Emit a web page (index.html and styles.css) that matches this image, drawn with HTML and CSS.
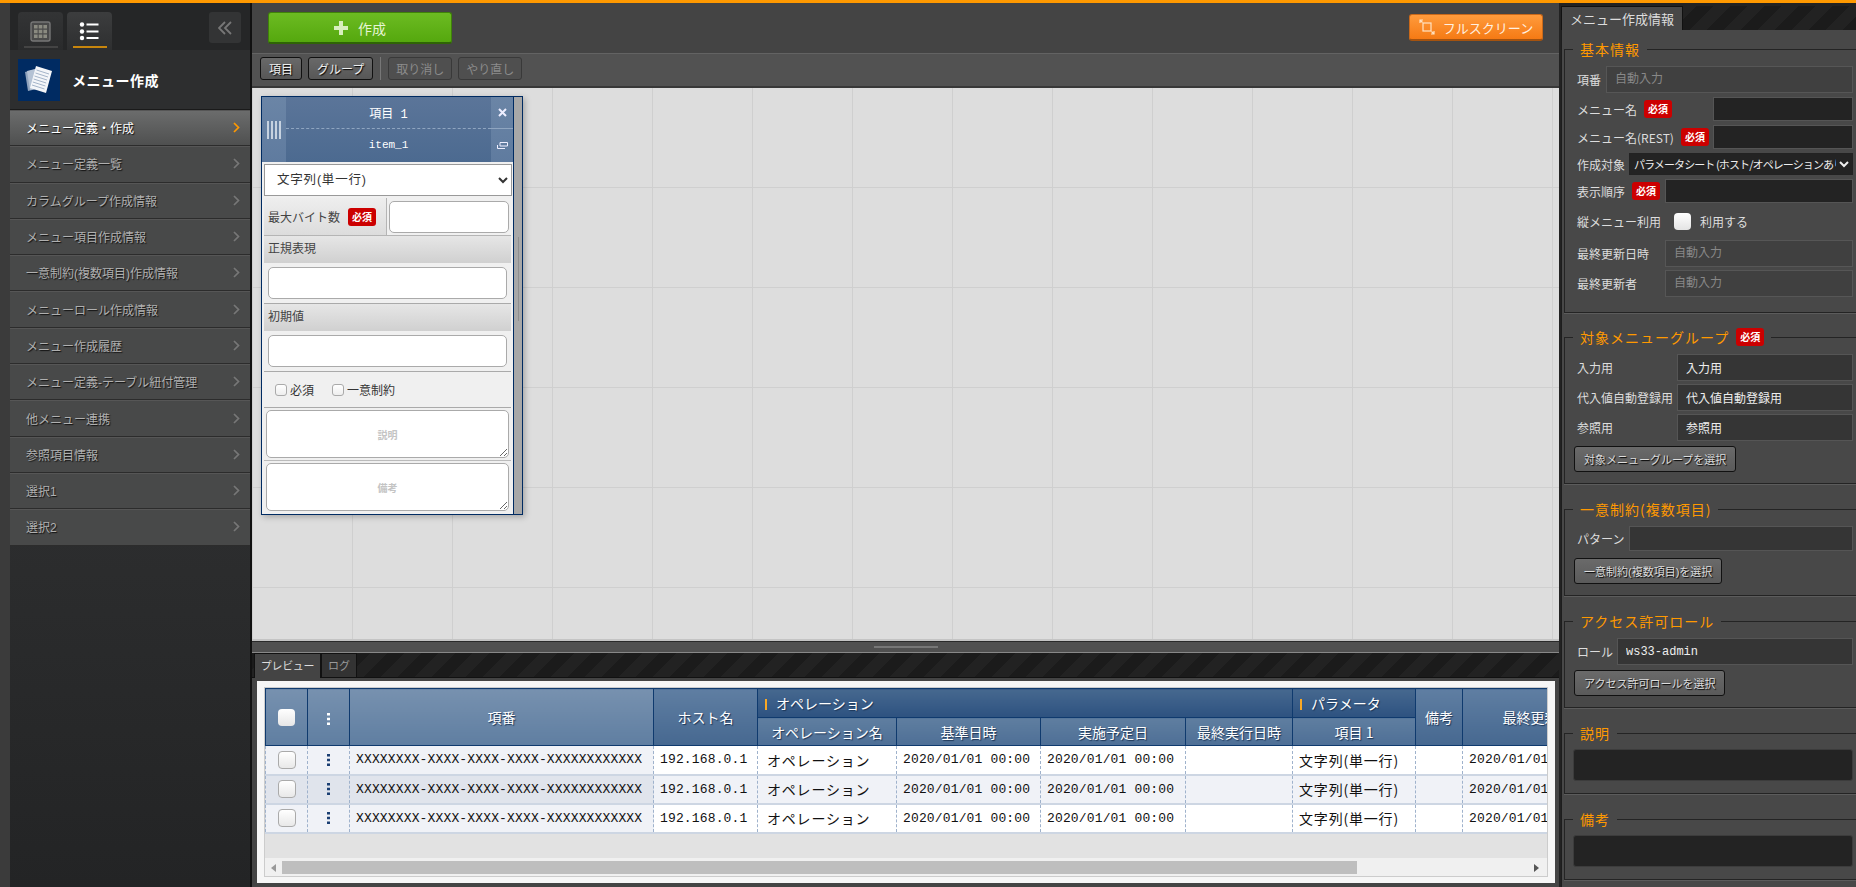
FILE: index.html
```html
<!DOCTYPE html>
<html lang="ja">
<head>
    <meta charset="UTF-8">
    <title>メニュー作成</title>
    <link rel="stylesheet" href="styles.css">
</head>
<body>
<div class="app">
    <div class="edge"></div>

    <!-- サイドメニュー -->
    <aside class="sidebar">
        <div class="side-tabs">
            <div class="side-tab">
                <svg class="tab-icon" viewBox="0 0 21 21"><rect x="1" y="1" width="19" height="19" rx="2" fill="#4a4a4a" stroke="#777" stroke-width="1.4"/><path d="M4 4h3.600v3.600H4zM8.700 4h3.600v3.600H8.700zM13.400 4H17v3.600h-3.600zM4 8.700h3.600v3.600H4zM8.700 8.700h3.600v3.600H8.700zM13.400 8.700H17v3.600h-3.600zM4 13.400h3.600V17H4zM8.700 13.400h3.600V17H8.700zM13.400 13.400H17V17h-3.600z" fill="#8a8a80"/></svg>
                <span class="tab-line"></span>
            </div>
            <div class="side-tab active">
                <svg class="tab-icon" viewBox="0 0 21 21"><circle cx="3" cy="3.500" r="2.200" fill="#fff"/><circle cx="3" cy="10.500" r="2.200" fill="#fff"/><circle cx="3" cy="17" r="2.200" fill="#fff"/><path d="M7.500 2.500H19.500V4.500H7.500zM7.500 9.500H19.500V11.500H7.500zM7.500 16H19.500V18H7.500z" fill="#fff"/></svg>
                <span class="tab-line"></span>
            </div>
            <div class="collapse-btn">
                <svg width="14" height="14" viewBox="0 0 14 14" fill="none" stroke="#777" stroke-width="1.800"><path d="M7 1 1 7l6 6M13 1 7 7l6 6"/></svg>
            </div>
        </div>
        <div class="side-title">
            <div class="logo">
                <svg width="30" height="30" viewBox="0 0 30 30">
                    <path d="M1 7 13 4l4 19L4 26z" fill="#8fa3bd"/>
                    <path d="M3 6 15 3l4 19L6 25z" fill="#b4c2d4"/>
                    <path d="M12 1 28 6l-6 22L6 23z" fill="#f4f6f9"/>
                    <path d="M12.500 5 25 9M11.500 8 24 12M10.500 11 23 15M9.700 14 22.200 18M8.800 17 21.400 21M8 20 20.500 24" stroke="#8fa3bd" stroke-width=".8"/>
                </svg>
            </div>
            <span class="side-name">メニュー作成</span>
        </div>
        <nav class="menu">
            <a class="menu-item active">メニュー定義・作成<svg class="chev" viewBox="0 0 7 11"><path d="M1 1l4.500 4.500L1 10"/></svg></a>
            <a class="menu-item">メニュー定義一覧<svg class="chev" viewBox="0 0 7 11"><path d="M1 1l4.500 4.500L1 10"/></svg></a>
            <a class="menu-item">カラムグループ作成情報<svg class="chev" viewBox="0 0 7 11"><path d="M1 1l4.500 4.500L1 10"/></svg></a>
            <a class="menu-item">メニュー項目作成情報<svg class="chev" viewBox="0 0 7 11"><path d="M1 1l4.500 4.500L1 10"/></svg></a>
            <a class="menu-item">一意制約(複数項目)作成情報<svg class="chev" viewBox="0 0 7 11"><path d="M1 1l4.500 4.500L1 10"/></svg></a>
            <a class="menu-item">メニューロール作成情報<svg class="chev" viewBox="0 0 7 11"><path d="M1 1l4.500 4.500L1 10"/></svg></a>
            <a class="menu-item">メニュー作成履歴<svg class="chev" viewBox="0 0 7 11"><path d="M1 1l4.500 4.500L1 10"/></svg></a>
            <a class="menu-item">メニュー定義-テーブル紐付管理<svg class="chev" viewBox="0 0 7 11"><path d="M1 1l4.500 4.500L1 10"/></svg></a>
            <a class="menu-item">他メニュー連携<svg class="chev" viewBox="0 0 7 11"><path d="M1 1l4.500 4.500L1 10"/></svg></a>
            <a class="menu-item">参照項目情報<svg class="chev" viewBox="0 0 7 11"><path d="M1 1l4.500 4.500L1 10"/></svg></a>
            <a class="menu-item">選択1<svg class="chev" viewBox="0 0 7 11"><path d="M1 1l4.500 4.500L1 10"/></svg></a>
            <a class="menu-item">選択2<svg class="chev" viewBox="0 0 7 11"><path d="M1 1l4.500 4.500L1 10"/></svg></a>
        </nav>
    </aside>

    <!-- メイン -->
    <main class="main">
        <div class="toolbar">
            <button class="btn-create">
                <svg width="14" height="14" viewBox="0 0 14 14"><path d="M5 0h4v5h5v4H9v5H5V9H0V5h5z" fill="#d8efbe"/></svg>
                作成
            </button>
            <button class="btn-full">
                <svg width="16" height="16" viewBox="0 0 16 16" fill="none" stroke="#ffe3c4" stroke-width="1.200"><rect x="4" y="4" width="8" height="8"/><path d="M1 4V1h3M1 1l2.500 2.500M15 12v3h-3M15 15l-2.500-2.500"/></svg>
                フルスクリーン
            </button>
        </div>
        <div class="subbar">
            <button class="btn">項目</button>
            <button class="btn">グループ</button>
            <span class="subbar-sep"></span>
            <button class="btn disabled">取り消し</button>
            <button class="btn disabled">やり直し</button>
        </div>

        <div class="canvas">
            <div class="card">
                <div class="card-main">
                    <div class="card-head">
                        <div class="card-handle"><span></span><span></span><span></span><span></span></div>
                        <div class="card-names">
                            <div class="card-name">項目 1</div>
                            <div class="card-name card-code">item_1</div>
                        </div>
                        <div class="card-tools">
                            <div class="card-tool">
                                <svg width="9" height="9" viewBox="0 0 9 9"><path d="M1 1l7 7M8 1 1 8" stroke="#eef" stroke-width="2"/></svg>
                            </div>
                            <div class="card-tool">
                                <svg width="11" height="7" viewBox="0 0 11 7" fill="none" stroke="#eef"><path d="M3 .5h7.500v3.500H3zM.5 3v3.500h7.500"/></svg>
                            </div>
                        </div>
                    </div>
                    <div class="card-body">
                        <select class="card-select"><option>文字列(単一行)</option></select>
                        <div class="card-row">
                            <label class="card-label">最大バイト数<span class="req">必須</span></label>
                            <div class="card-cell"><input class="card-input" type="text"></div>
                        </div>
                        <div class="card-sec">正規表現</div>
                        <div class="card-block"><input class="card-input" type="text"></div>
                        <div class="card-sec">初期値</div>
                        <div class="card-block"><input class="card-input" type="text"></div>
                        <div class="card-checks">
                            <label class="check-label"><input class="check" type="checkbox">必須</label>
                            <label class="check-label"><input class="check" type="checkbox">一意制約</label>
                        </div>
                        <div class="card-area"><textarea class="area" placeholder="説明"></textarea></div>
                        <div class="card-area"><textarea class="area" placeholder="備考"></textarea></div>
                    </div>
                </div>
                <div class="card-scroll"><span></span></div>
            </div>
        </div>

        <div class="splitter"></div>

        <div class="preview">
            <div class="tabs">
                <span class="tab active">プレビュー</span>
                <span class="tab">ログ</span>
            </div>
            <div class="preview-body">
                <div class="table-box">
                    <div class="table-clip">
                        <table class="grid">
                            <colgroup>
                                <col class="c-check"><col class="c-menu"><col class="c-id"><col class="c-host">
                                <col class="c-op"><col class="c-date"><col class="c-plan"><col class="c-last">
                                <col class="c-item"><col class="c-note"><col class="c-upd">
                            </colgroup>
                            <thead>
                                <tr class="head-1">
                                    <th class="th-light" rowspan="2"><input class="check-head" type="checkbox"></th>
                                    <th class="th-light" rowspan="2"><svg class="dots" viewBox="0 0 3 12"><path d="M0 0h3v2.600H0zM0 4.700h3v2.600H0zM0 9.400h3V12H0z" fill="#fff"/></svg></th>
                                    <th class="th-light" rowspan="2">項番</th>
                                    <th class="th-mid" rowspan="2">ホスト名</th>
                                    <th class="th-group" colspan="4"><span class="group-mark"></span>オペレーション</th>
                                    <th class="th-group"><span class="group-mark"></span>パラメータ</th>
                                    <th class="th-mid" rowspan="2">備考</th>
                                    <th class="th-mid" rowspan="2">最終更新日時</th>
                                </tr>
                                <tr class="head-2">
                                    <th class="th-sub">オペレーション名</th>
                                    <th class="th-sub">基準日時</th>
                                    <th class="th-sub">実施予定日</th>
                                    <th class="th-sub">最終実行日時</th>
                                    <th class="th-sub">項目 1</th>
                                </tr>
                            </thead>
                            <tbody>
                                <tr>
                                    <td class="fix center"><input class="check-row" type="checkbox"></td>
                                    <td class="fix center"><svg class="dots" viewBox="0 0 3 12"><path d="M0 0h3v2.600H0zM0 4.700h3v2.600H0zM0 9.400h3V12H0z" fill="#1b3f73"/></svg></td>
                                    <td class="fix">XXXXXXXX-XXXX-XXXX-XXXX-XXXXXXXXXXXX</td>
                                    <td>192.168.0.1</td>
                                    <td class="jp op">オペレーション</td>
                                    <td>2020/01/01 00:00</td>
                                    <td>2020/01/01 00:00</td>
                                    <td></td>
                                    <td class="jp">文字列(単一行)</td>
                                    <td></td>
                                    <td>2020/01/01 00:00</td>
                                </tr>
                                <tr class="even">
                                    <td class="fix center"><input class="check-row" type="checkbox"></td>
                                    <td class="fix center"><svg class="dots" viewBox="0 0 3 12"><path d="M0 0h3v2.600H0zM0 4.700h3v2.600H0zM0 9.400h3V12H0z" fill="#1b3f73"/></svg></td>
                                    <td class="fix">XXXXXXXX-XXXX-XXXX-XXXX-XXXXXXXXXXXX</td>
                                    <td>192.168.0.1</td>
                                    <td class="jp op">オペレーション</td>
                                    <td>2020/01/01 00:00</td>
                                    <td>2020/01/01 00:00</td>
                                    <td></td>
                                    <td class="jp">文字列(単一行)</td>
                                    <td></td>
                                    <td>2020/01/01 00:00</td>
                                </tr>
                                <tr>
                                    <td class="fix center"><input class="check-row" type="checkbox"></td>
                                    <td class="fix center"><svg class="dots" viewBox="0 0 3 12"><path d="M0 0h3v2.600H0zM0 4.700h3v2.600H0zM0 9.400h3V12H0z" fill="#1b3f73"/></svg></td>
                                    <td class="fix">XXXXXXXX-XXXX-XXXX-XXXX-XXXXXXXXXXXX</td>
                                    <td>192.168.0.1</td>
                                    <td class="jp op">オペレーション</td>
                                    <td>2020/01/01 00:00</td>
                                    <td>2020/01/01 00:00</td>
                                    <td></td>
                                    <td class="jp">文字列(単一行)</td>
                                    <td></td>
                                    <td>2020/01/01 00:00</td>
                                </tr>
                            </tbody>
                        </table>
                    </div>
                    <div class="hscroll">
                        <svg width="5" height="8" viewBox="0 0 5 8"><path d="M5 0v8L0 4z" fill="#999"/></svg>
                        <div class="hscroll-track"><div class="hscroll-thumb"></div></div>
                        <svg width="5" height="8" viewBox="0 0 5 8"><path d="M0 0v8l5-4z" fill="#555"/></svg>
                    </div>
                </div>
            </div>
        </div>
    </main>

    <!-- 右パネル -->
    <aside class="info">
        <div class="info-tabs"><span class="info-tab">メニュー作成情報</span></div>
        <div class="info-body">
            <fieldset class="fs fs-basic">
                <legend>基本情報</legend>
                <div class="row tall first"><label class="lbl w-29">項番</label><input class="ipt auto" placeholder="自動入力"></div>
                <div class="row"><label class="lbl w-136">メニュー名<span class="req">必須</span></label><input class="ipt dark"></div>
                <div class="row"><label class="lbl w-136">メニュー名(REST)<span class="req">必須</span></label><input class="ipt dark"></div>
                <div class="row short"><label class="lbl w-52">作成対象</label><select class="sel"><option>パラメータシート (ホスト/オペレーションあり)</option></select></div>
                <div class="row"><label class="lbl w-88">表示順序<span class="req">必須</span></label><input class="ipt dark"></div>
                <div class="row check-row-wrap"><label class="lbl w-97">縦メニュー利用</label><input class="check-info" type="checkbox"><span class="check-text">利用する</span></div>
                <div class="row tall"><label class="lbl w-88">最終更新日時</label><input class="ipt auto" placeholder="自動入力"></div>
                <div class="row tall"><label class="lbl w-88">最終更新者</label><input class="ipt auto" placeholder="自動入力"></div>
            </fieldset>
            <fieldset class="fs">
                <legend>対象メニューグループ<span class="req">必須</span></legend>
                <div class="row tall"><label class="lbl w-100">入力用</label><input class="ipt val" value="入力用"></div>
                <div class="row tall"><label class="lbl w-100">代入値自動登録用</label><input class="ipt val" value="代入値自動登録用"></div>
                <div class="row tall"><label class="lbl w-100">参照用</label><input class="ipt val" value="参照用"></div>
                <button class="btn-select">対象メニューグループを選択</button>
            </fieldset>
            <fieldset class="fs">
                <legend>一意制約(複数項目)</legend>
                <div class="row mid"><label class="lbl w-52">パターン</label><input class="ipt val"></div>
                <button class="btn-select">一意制約(複数項目)を選択</button>
            </fieldset>
            <fieldset class="fs">
                <legend>アクセス許可ロール</legend>
                <div class="row tall"><label class="lbl w-40">ロール</label><input class="ipt val" value="ws33-admin"></div>
                <button class="btn-select">アクセス許可ロールを選択</button>
            </fieldset>
            <fieldset class="fs fs-note">
                <legend>説明</legend>
                <div class="note"></div>
            </fieldset>
            <fieldset class="fs fs-note">
                <legend>備考</legend>
                <div class="note"></div>
            </fieldset>
        </div>
    </aside>
</div>
</body>
</html>
```

FILE: styles.css
```css
* {
    box-sizing: border-box;
}

html, body {
    margin: 0;
    height: 100%;
    overflow: hidden;
}

body {
    background-color: #333;
    color: #eee;
    font-family: "Liberation Sans", "Noto Sans CJK JP", sans-serif;
    font-size: 12px;
}

button {
    font-family: inherit;
}

.app {
    display: flex;
    height: 887px;
    border-top: 3px solid #f90;
    background-color: #222;
}

.edge {
    width: 10px;
    background-color: #3b3b3b;
    flex-shrink: 0;
}

/* サイドメニュー */
.sidebar {
    width: 242px;
    flex-shrink: 0;
    border-right: 2px solid #111;
    background: linear-gradient(#2c2d2e 60%, #232425);
}

.side-tabs {
    height: 47px;
    padding: 9px 0 0 8px;
    display: flex;
    gap: 4px;
    background-color: #252627;
    position: relative;
}

.side-tab {
    width: 45px;
    height: 38px;
    border-radius: 4px 4px 0 0;
    background: linear-gradient(#333435, #2a2b2c);
    display: flex;
    flex-direction: column;
    align-items: center;
    padding-top: 9px;
}

.side-tab.active {
    background: linear-gradient(#3c3d3e, #2e2f30);
}

.tab-icon {
    width: 21px;
    height: 21px;
}

.tab-line {
    width: 34px;
    height: 2px;
    margin-top: 4px;
    background-color: #444;
}

.side-tab.active .tab-line {
    background-color: #c8860d;
}

.collapse-btn {
    width: 32px;
    height: 31px;
    margin-left: auto;
    margin-right: 9px;
    border-radius: 3px;
    background-color: #333435;
    display: flex;
    align-items: center;
    justify-content: center;
}

.side-title {
    height: 60px;
    padding-left: 8px;
    display: flex;
    align-items: center;
    gap: 12px;
    background-color: #2d2e2f;
    border-bottom: 1px solid #1a1a1a;
}

.logo {
    width: 42px;
    height: 42px;
    background-color: #002b62;
    display: flex;
    align-items: center;
    justify-content: center;
}

.side-name {
    color: #fff;
    font-size: 14px;
    font-weight: bold;
    letter-spacing: 0.500px;
}

.menu-item {
    height: 36.300px;
    padding: 0 10px 0 16px;
    display: flex;
    align-items: center;
    justify-content: space-between;
    color: #b0b0b0;
    background-color: #484949;
    border-bottom: 1px solid #2c2c2c;
    box-shadow: inset 0 1px 0 #565656;
    text-shadow: 1px 1px 1px #111;
}

.menu-item.active {
    color: #fff;
    background: linear-gradient(#6c6d6d, #4f5050);
}

.chev {
    width: 7px;
    height: 11px;
    fill: none;
    stroke: #777;
    stroke-width: 1.700;
}

.menu-item.active .chev {
    stroke: #f90;
}

/* メイン */
.main {
    width: 1307px;
    flex-shrink: 0;
    display: flex;
    flex-direction: column;
}

.toolbar {
    height: 50px;
    padding: 9px 16px 0;
    display: flex;
    justify-content: space-between;
    align-items: flex-start;
    background-color: #444;
}

.btn-create {
    width: 184px;
    height: 32px;
    display: flex;
    align-items: center;
    justify-content: center;
    gap: 10px;
    color: #e6f5d5;
    font-size: 14px;
    background: linear-gradient(#6cbb22, #55a80e);
    border: 1px solid #3f8209;
    border-bottom: 2px solid #2f6405;
    border-radius: 3px;
}

.btn-full {
    width: 134px;
    height: 27px;
    margin-top: 2px;
    display: flex;
    align-items: center;
    justify-content: center;
    gap: 8px;
    color: #fff0e0;
    font-size: 13px;
    background: linear-gradient(#ff9b3c, #f57a14);
    border: 1px solid #c9691a;
    border-bottom: 2px solid #a5530f;
    border-radius: 3px;
}

.subbar {
    height: 35px;
    padding: 3px 8px 0;
    display: flex;
    align-items: flex-start;
    gap: 6px;
    background-color: #525252;
    border-top: 1px solid #636363;
    border-bottom: 2px solid #383838;
}

.btn {
    height: 23px;
    padding: 0 8px;
    color: #eee;
    font-size: 12px;
    background: linear-gradient(#696969, #575757);
    border: 1px solid #111;
    border-radius: 3px;
    text-shadow: 1px 1px 1px #000;
}

.btn.disabled {
    width: 64px;
    padding: 0;
    color: #8c8c8c;
    background: #4f4f4f;
    border-color: #393939;
    text-shadow: none;
}

.subbar-sep {
    width: 1px;
    height: 23px;
    margin: 0 1px 0 1px;
    background-color: #777;
}

.canvas {
    height: 553px;
    position: relative;
    background-color: #ddd;
    background-image:
        linear-gradient(#cfcfcf 1px, transparent 1px),
        linear-gradient(90deg, #cfcfcf 1px, transparent 1px);
    background-size: 100px 100px;
    background-position: 0 -1px, 0 0;
    border-bottom: 2px solid #c4c4c4;
}

/* 項目カード */
.card {
    position: absolute;
    left: 9px;
    top: 8px;
    width: 262px;
    height: 419px;
    display: flex;
    border: 1px solid #002b62;
    box-shadow: 2px 2px 6px rgba(0, 0, 0, 0.25);
    color: #444;
}

.card-main {
    width: 252px;
    border-right: 1px solid #002b62;
    background-color: #f0f0f0;
    display: flex;
    flex-direction: column;
}

.card-scroll {
    width: 8px;
    background-color: #a8a8a8;
    padding-top: 140px;
    display: flex;
    justify-content: center;
}

.card-scroll span {
    width: 1px;
    height: 84px;
    background-color: #8f8f8f;
}

.card-head {
    height: 65px;
    display: flex;
    color: #fff;
    font-family: "Liberation Mono", "Noto Sans CJK JP", monospace;
}

.card-handle {
    width: 24px;
    display: flex;
    align-items: center;
    justify-content: center;
    gap: 2px;
    background: linear-gradient(#6b85a6, #5f7b9f);
}

.card-handle span {
    width: 2px;
    height: 18px;
    background-color: #c6d2e0;
}

.card-names {
    flex: 1;
    background: linear-gradient(#5b7599, #4c6a90);
}

.card-name {
    height: 32px;
    display: flex;
    align-items: center;
    justify-content: center;
    font-size: 12px;
}

.card-name:first-child {
    border-bottom: 1px dashed #8fa5c0;
}

.card-code {
    font-size: 11px;
}

.card-tools {
    width: 22px;
    background: linear-gradient(#6b85a6, #5f7b9f);
}

.card-tool {
    height: 32px;
    display: flex;
    align-items: center;
    justify-content: center;
}

.card-tool:first-child {
    border-bottom: 1px solid #8fa5c0;
}

.card-body {
    flex: 1;
    padding: 2px;
}

.card-select {
    display: block;
    width: 248px;
    height: 32px;
    padding-left: 8px;
    color: #333;
    font-size: 12.500px;
    letter-spacing: 0.800px;
    font-family: "Liberation Sans", "Noto Sans CJK JP", sans-serif;
    background-color: #fff;
    border: 1px solid #999;
    margin-bottom: 2px;
}

.card-row {
    height: 38px;
    display: flex;
    border-bottom: 1px solid #b5b5b5;
}

.card-label {
    width: 123px;
    padding-left: 4px;
    display: flex;
    align-items: center;
    gap: 8px;
    background: linear-gradient(#eee, #dcdcdc);
    border-right: 1px solid #b5b5b5;
}

.card-cell {
    flex: 1;
    padding: 3px 2px 0;
}

.card-input {
    display: block;
    width: 100%;
    height: 32px;
    background-color: #fff;
    border: 1px solid #aaa;
    border-radius: 5px;
}

.card-sec {
    height: 27px;
    padding-left: 4px;
    line-height: 27px;
    background: linear-gradient(#e6e6e6, #d0d0d0);
}

.card-block {
    height: 41px;
    padding: 4px 4px 0;
    border-bottom: 1px solid #aaa;
}

.card-checks {
    height: 36px;
    padding-left: 11px;
    display: flex;
    align-items: center;
    gap: 18px;
    color: #333;
    border-bottom: 1px solid #aaa;
}

.check-label {
    display: flex;
    align-items: center;
    gap: 3px;
}

.check {
    appearance: none;
    width: 12px;
    height: 12px;
    margin: 0;
    background: linear-gradient(#fff, #eee);
    border: 1px solid #aaa;
    border-radius: 3px;
}

.card-area {
    height: 53px;
    padding: 2px 2px 0;
    border-bottom: 1px solid #bbb;
}

.card-area:last-child {
    height: 51px;
    border-bottom: none;
}

.area {
    display: block;
    width: 100%;
    height: 48px;
    padding-top: 16px;
    text-align: center;
    font-size: 10px;
    font-weight: bold;
    font-family: inherit;
    background-color: #fff;
    border: 1px solid #aaa;
    border-radius: 5px;
}

.area::placeholder {
    color: #c4c4c4;
}

.req {
    display: inline-block;
    width: 28px;
    height: 18px;
    line-height: 18px;
    text-align: center;
    color: #fff;
    font-size: 10px;
    font-weight: bold;
    font-family: "Noto Sans CJK JP", sans-serif;
    background-color: #c00;
    border-radius: 3px;
    letter-spacing: 0;
}

.splitter {
    height: 12px;
    flex-shrink: 0;
    position: relative;
    background-color: #505050;
    border-top: 1px solid #2a2a2a;
    border-bottom: 1px solid #888;
}

.splitter::after {
    content: "";
    position: absolute;
    left: 622px;
    top: 4px;
    width: 64px;
    height: 2px;
    background-color: #777;
}

/* プレビュー */
.preview {
    flex: 1;
    display: flex;
    flex-direction: column;
    background-color: #444;
    min-height: 0;
}

.tabs {
    height: 25px;
    padding-left: 2px;
    display: flex;
    background: repeating-linear-gradient(135deg, #1b1b1b, #1b1b1b 12px, #222 12px, #222 24px);
    border-bottom: 1px solid #111;
    flex-shrink: 0;
}

.tab {
    width: 36px;
    height: 24px;
    line-height: 24px;
    text-align: center;
    font-size: 11px;
    color: #999;
    background-color: #333;
    border: 1px solid #111;
    border-bottom: none;
}

.tab.active {
    width: 67px;
    color: #ddd;
    height: 25px;
    letter-spacing: -0.300px;
    background-color: #444;
}

.preview-body {
    flex: 1;
    margin: 3px 4px 4px 5px;
    padding: 6px 7px 6px;
    background-color: #f6f6f6;
}

.table-box {
    height: 190px;
    display: flex;
    flex-direction: column;
    border: 1px solid #ccc;
    background-color: #e2e2e2;
}

.table-clip {
    flex: 1;
    overflow: hidden;
}

.grid {
    width: 1361px;
    table-layout: fixed;
    border-collapse: collapse;
    color: #111;
    font-family: "Liberation Mono", "Noto Sans CJK JP", monospace;
}

.c-check, .c-menu { width: 42px; }
.c-id { width: 304px; }
.c-host { width: 104px; }
.c-op { width: 139px; }
.c-date { width: 144px; }
.c-plan { width: 145px; }
.c-last { width: 107px; }
.c-item { width: 123px; }
.c-note { width: 47px; }
.c-upd { width: 164px; }

.grid th {
    color: #fff;
    font-size: 14px;
    font-weight: normal;
    font-family: "Noto Sans CJK JP", sans-serif;
    border: 1px solid #0f3a6e;
    text-shadow: 1px 1px 1px #1c3556;
    padding: 0;
    overflow: hidden;
    white-space: nowrap;
}

.head-1 {
    height: 29px;
}

.head-2 {
    height: 28px;
}

.th-light {
    background: linear-gradient(#7791af, #5f7ea1);
}

.th-mid {
    background: linear-gradient(#5f7ea2, #466890);
}

.grid .th-group {
    text-align: left;
    padding-left: 7px;
    background: linear-gradient(#46688f, #2d5280);
}

.th-sub {
    background: linear-gradient(#5f7ea0, #4e6f96);
}

.group-mark {
    display: inline-block;
    width: 2px;
    height: 11px;
    margin-right: 9px;
    background-color: #f9a825;
    vertical-align: -1px;
}

.dots {
    display: inline-block;
    width: 3px;
    height: 12px;
    margin-right: 1px;
    vertical-align: middle;
}

.check-head {
    appearance: none;
    display: block;
    width: 17px;
    height: 17px;
    margin: 0 auto;
    background: linear-gradient(#fff, #e6e6e6);
    border-radius: 4px;
}

.check-row {
    appearance: none;
    display: block;
    width: 18px;
    height: 18px;
    margin: 0 auto;
    background: linear-gradient(#fff, #e8e8e8);
    border: 1px solid #aaa;
    border-radius: 4px;
}

.grid td {
    height: 29px;
    padding: 0 0 0 6px;
    font-size: 13px;
    letter-spacing: 0.150px;
    white-space: nowrap;
    background-color: #fff;
    border-left: 1px dashed #9fb2cc;
    border-right: 1px dashed #9fb2cc;
    border-bottom: 2px solid #cdd6e3;
}

.grid td.jp {
    font-size: 14px;
    line-height: 14px;
    letter-spacing: 0.800px;
    font-family: "Noto Sans CJK JP", sans-serif;
}

.grid td.op {
    padding-left: 9px;
}

.grid td.center {
    padding: 0;
    text-align: center;
}

.grid td.fix {
    background-color: #f0f2f7;
}

.grid .even td {
    background-color: #f0f2f7;
}

.grid .even td.fix {
    background-color: #e0e4ec;
}

.hscroll {
    height: 18px;
    padding: 3px 8px 2px 6px;
    display: flex;
    align-items: center;
    gap: 6px;
    background-color: #f0f0f0;
}

.hscroll-track {
    flex: 1;
    height: 13px;
}

.hscroll-thumb {
    width: 1075px;
    height: 100%;
    background-color: #bebebe;
}

/* 右パネル */
.info {
    width: 297px;
    flex-shrink: 0;
    padding: 3px 0 0 2px;
    display: flex;
    flex-direction: column;
    overflow: hidden;
    font-family: "Liberation Mono", "Noto Sans CJK JP", monospace;
}

.info-tabs {
    height: 24px;
    background: repeating-linear-gradient(135deg, #1b1b1b, #1b1b1b 12px, #222 12px, #222 24px);
    flex-shrink: 0;
}

.info-tab {
    display: block;
    width: 122px;
    height: 24px;
    line-height: 23px;
    padding-left: 8px;
    color: #ddd;
    font-size: 13px;
    white-space: nowrap;
    background-color: #484848;
    border: 1px solid #111;
    border-bottom: none;
    font-family: "Noto Sans CJK JP", sans-serif;
}

.info-body {
    flex: 1;
    padding: 0 0 0 2px;
    background-color: #484848;
    border-left: 1px solid #1d1d1d;
}

.fs {
    margin: 0 0 15px;
    padding: 7px 3px 11px 12px;
    min-width: 0;
    border: 1px solid #242424;
    border-right: none;
    box-shadow: 0 1px 0 #5c5c5c;
}

.fs legend {
    margin-left: -4px;
    padding: 0 7px;
    height: 20px;
    line-height: 20px;
    color: #f90;
    font-size: 14px;
    letter-spacing: 1px;
    font-family: "Noto Sans CJK JP", sans-serif;
    display: flex;
    align-items: center;
    gap: 7px;
}

.fs-basic {
    padding-bottom: 12px;
    margin-top: 9px;
    margin-bottom: 14px;
}

.fs-note {
    padding: 6px 3px 12px 12px;
}

.row {
    height: 24px;
    margin-bottom: 4px;
    display: flex;
    align-items: center;
}

.row.tall {
    height: 27px;
    margin-bottom: 3px;
}

.row.first {
    margin-bottom: 4px;
}

.row.short {
    height: 22px;
}

.row.mid {
    height: 25px;
    margin-bottom: 7px;
}

.row.check-row-wrap {
    height: 29px;
}

.lbl {
    flex-shrink: 0;
    display: flex;
    align-items: center;
    gap: 7px;
    color: #ddd;
    font-family: "Noto Sans CJK JP", "Liberation Mono", sans-serif;
    white-space: nowrap;
}

.w-29 { width: 29px; }
.w-40 { width: 40px; }
.w-52 { width: 52px; }
.w-88 { width: 88px; }
.w-97 { width: 97px; }
.w-100 { width: 100px; }
.w-136 { width: 136px; }

.ipt {
    flex: 1;
    min-width: 0;
    height: 100%;
    padding: 0 8px;
    font-size: 12px;
    font-family: "Liberation Mono", "Noto Sans CJK JP", monospace;
    color: #eee;
    border: 1px solid #555;
    outline: none;
}

.ipt::placeholder {
    color: #888;
}

.ipt.auto {
    background-color: #404040;
    border-color: #565656;
}

.ipt.dark {
    background-color: #232323;
}

.ipt.val {
    background-color: #353535;
}

.sel {
    flex: 1;
    min-width: 0;
    height: 100%;
    padding: 0;
    font-size: 11px;
    letter-spacing: -0.900px;
    font-family: "Noto Sans CJK JP", sans-serif;
    color: #eee;
    background-color: #232323;
    border: 1px solid #222;
}

.check-info {
    appearance: none;
    width: 17px;
    height: 17px;
    margin: 0 9px 0 0;
    background: linear-gradient(#fff, #e4e4e4);
    border-radius: 4px;
}

.check-text {
    color: #ddd;
    font-family: "Noto Sans CJK JP", sans-serif;
}

.btn-select {
    display: block;
    height: 26px;
    margin: 5px 0 0 -3px;
    padding: 0 9px;
    color: #ddd;
    font-size: 11px;
    font-family: "Liberation Sans", "Noto Sans CJK JP", sans-serif;
    background: linear-gradient(#6a6a6a, #5a5a5a);
    border: 1px solid #111;
    border-radius: 3px;
    text-shadow: 1px 1px 1px #000;
}

.note {
    height: 32px;
    margin-left: -4px;
    background-color: #232323;
    border: 1px solid #3c3c3c;
    border-radius: 3px;
}
```
